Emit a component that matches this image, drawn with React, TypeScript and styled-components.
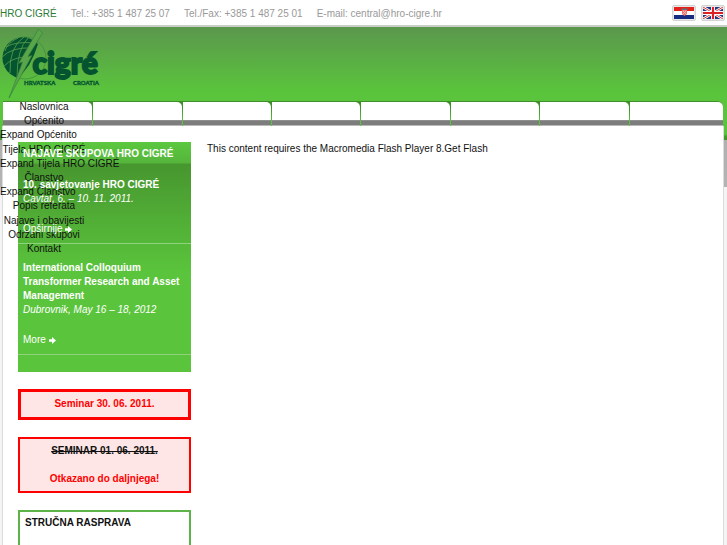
import React from "react";
import styled, { createGlobalStyle } from "styled-components";

const GlobalStyle = createGlobalStyle`
  * { box-sizing: border-box; }
  body {
    margin: 0;
    overflow: hidden;
    background: #fff;
    color: #111;
    font: 10px/14px "Liberation Sans", Arial, sans-serif;
  }
  p, h1, h2, ul { margin: 0; padding: 0; font-size: inherit; }
  a { color: inherit; text-decoration: none; }
`;

const Backdrop = styled.div`
  background:
    linear-gradient(#5b974d, #5ac43c 64px, #5ac43c 107px, #42962c 110px, #42962c 113px, #b0b0b0 113px, #b4b4b4 160px, #f4f4f4 160px)
    0 27px / 100% 100% no-repeat;
`;

const TopBar = styled.div`
  display: flex;
  justify-content: space-between;
  align-items: center;
  height: 27px;
  padding-right: 2px;
  background: #fff;
  border-bottom: 2px solid #c9cfc7;
`;

const Contact = styled.div`
  display: flex;
  gap: 14px;
  padding-top: 2px;
  color: #999;
`;

const Company = styled.span`
  color: #2b7a35;
`;

const Flags = styled.div`
  display: flex;
  gap: 5px;
`;

const FlagLink = styled.a`
  display: flex;
  padding: 1px;
  background: #e8e8e8;
  border: 1px solid #d4d4d4;
  border-radius: 2px;
`;

const Header = styled.header`
  height: 74px;
`;

const Sheet = styled.div`
  margin: 0 4px 0 3px;
`;

const Tabs = styled.div`
  display: grid;
  grid-template-columns: 90fr repeat(6, 89fr) 93fr;
  height: 25px;
  padding-top: 1px;
  background: linear-gradient(#3f8f2a 6px, #5ac43c 20px);
  border-radius: 0 6px 0 0;
`;

const Tab = styled.div`
  background: linear-gradient(#fff 18px, #a0a0a0 18px, #7d7d7d 19px, #7d7d7d 23px, #b9b9b9 23px);
  border-radius: 0 5px 0 0;
  margin-right: 1px;

  &:last-child { margin-right: 0; }
`;

const Menu = styled.ul`
  position: absolute;
  z-index: 1;
  top: 100px;
  left: 0;
  display: flex;
  flex-direction: column;
  justify-content: space-between;
  width: 88px;
  height: 156px;
  list-style: none;
  text-align: center;
  white-space: nowrap;
`;

const MenuItem = styled.li<{ $expander?: boolean }>`
  text-align: ${(p) => (p.$expander ? "left" : "center")};
`;

const Content = styled.div`
  display: flex;
  align-items: flex-start;
  gap: 16px;
  margin: 0 -1px;
  padding: 16px 16px 0 15px;
  background: #fff;
  border: solid #dcdcdc;
  border-width: 0 1px;
`;

const Sidebar = styled.aside`
  display: flex;
  flex-direction: column;
  gap: 17px;
  width: 173px;
  flex-shrink: 0;
`;

const News = styled.section`
  height: 230px;
  color: #fff;
  background: linear-gradient(#5cc83f, #55b53b 21px, #47962f 22px, #5ac43c 130px);
`;

const NewsTitle = styled.h2`
  position: relative;
  z-index: 2;
  padding: 5px 5px 3px;
`;

const Entry = styled.article<{ $lead?: boolean }>`
  position: relative;
  z-index: 2;
  padding: ${(p) => (p.$lead ? "14px 5px 7px" : "17px 5px 7px")};
  border-bottom: 1px solid #8fd27c;
`;

const Place = styled.p`
  font-style: italic;
  margin-bottom: 16px;
`;

const More = styled.a`
  display: flex;
  align-items: center;
  gap: 3px;
`;

const Notice = styled.section<{ $heavy?: boolean }>`
  padding: ${(p) => (p.$heavy ? "5px 5px 6px" : "5px")};
  border: ${(p) => (p.$heavy ? 3 : 2)}px solid #f00;
  background: #ffe6e6;
  color: #f00;
  font-weight: bold;
  text-align: center;
`;

const Cancelled = styled.del`
  display: block;
  margin-bottom: 14px;
  color: #111;
`;

const Discussion = styled.section`
  height: 60px;
  padding: 4px 5px;
  border: 2px solid #5cb348;
`;

const Main = styled.main`
  flex: 1;
`;

const Arrow = () => (
  <svg width="7" height="7" viewBox="0 0 7 7" aria-hidden="true">
    <path d="M0 2.300h3V0L7 3.500L3 7V4.700H0z" fill="#fff" />
  </svg>
);

const CroatianFlag = () => (
  <svg width="20" height="12" viewBox="0 0 20 12" aria-hidden="true">
    <path fill="#e32119" d="M0 0h20v4H0z" />
    <path fill="#fff" d="M0 4h20v4H0z" />
    <path fill="#152c80" d="M0 8h20v4H0z" />
    <path fill="#ee7770" d="M8 3h5v4l-2.500 2L8 7z" />
    <path fill="#f8b8b4" d="M9 4h1v1H9zM11 4h1v1h-1zM10 5h1v1h-1zM9 6h1v1H9zM11 6h1v1h-1z" />
    <path fill="#667083" d="M7.500 1.500h6V3h-6z" />
  </svg>
);

const BritishFlag = () => (
  <svg width="20" height="12" viewBox="0 0 20 12" aria-hidden="true">
    <path fill="#26387f" d="M0 0h20v12H0z" />
    <path stroke="#fff" strokeWidth="2.600" d="M0 0l20 12M20 0L0 12" />
    <path stroke="#e23b3b" strokeWidth="1" d="M0 0l20 12M20 0L0 12" />
    <path stroke="#fff" strokeWidth="4" d="M10 0v12M0 6h20" />
    <path stroke="#dd2026" strokeWidth="2.200" d="M10 0v12M0 6h20" />
  </svg>
);

const Logo = () => (
  <svg width="104" height="74" viewBox="0 0 104 74" role="img" aria-label="Cigré Hrvatska Croatia">
    <circle cx="25" cy="31" r="21" fill="none" stroke="#3d8a3d" strokeWidth="0.700" />
    <path fill="#04552f" d="M38 17A20.500 20.500 0 1 0 19 51L29 38L34 28z" />
    <g fill="none" stroke="#5a9f4e" strokeWidth="0.800">
      <path d="M2 30Q12 20 31 21M6 20Q16 14 34 16M4 39Q12 31 24 30" />
      <path d="M24 10Q9 20 10 46M28 11Q17 22 17 50M18 11Q7 16 5 24" />
    </g>
    <path d="M38.500 2L42.500 6L28 29.500L32 28.500L9 71L22.500 35L18.500 36.500z" fill="#5aa54a" stroke="#337d3c" strokeWidth="0.600" />
    <text x="32.500" y="47" fill="#04552f" stroke="#04552f" strokeWidth="1.900" fontFamily="Lato" fontWeight="900" fontSize="30">cigré</text>
    <g fill="#04552f" stroke="#04552f" strokeWidth="0.300" fontFamily="Lato" fontWeight="900" fontSize="6">
      <text x="24" y="58">HRVATSKA</text>
      <text x="73" y="58">CROATIA</text>
    </g>
  </svg>
);

const menu: { label: string; expander?: boolean }[] = [
  { label: "Naslovnica" },
  { label: "Općenito" },
  { label: "Expand Općenito", expander: true },
  { label: "Tijela HRO CIGRÉ" },
  { label: "Expand Tijela HRO CIGRÉ", expander: true },
  { label: "Članstvo" },
  { label: "Expand Članstvo", expander: true },
  { label: "Popis referata" },
  { label: "Najave i obavijesti" },
  { label: "Održani skupovi" },
  { label: "Kontakt" },
];

export default function App() {
  return (
    <Backdrop>
      <GlobalStyle />
      <TopBar>
        <Contact>
          <Company>HRO CIGRÉ</Company>
          <span>Tel.: +385 1 487 25 07</span>
          <span>Tel./Fax: +385 1 487 25 01</span>
          <span>E-mail: central@hro-cigre.hr</span>
        </Contact>
        <Flags>
          <FlagLink href="#hr" aria-label="Hrvatski"><CroatianFlag /></FlagLink>
          <FlagLink href="#en" aria-label="English"><BritishFlag /></FlagLink>
        </Flags>
      </TopBar>
      <Header><Logo /></Header>
      <Sheet>
        <Tabs>
          {Array.from({ length: 8 }, (_, i) => <Tab key={i} />)}
        </Tabs>
        <Content>
          <Sidebar>
            <News>
              <NewsTitle>NAJAVE SKUPOVA HRO CIGRÉ</NewsTitle>
              <Entry $lead>
                <h2>10. savjetovanje HRO CIGRÉ</h2>
                <Place>Cavtat, 6. – 10. 11. 2011.</Place>
                <More href="#savjetovanje">Opširnije <Arrow /></More>
              </Entry>
              <Entry>
                <h2>International Colloquium Transformer Research and Asset Management</h2>
                <Place>Dubrovnik, May 16 – 18, 2012</Place>
                <More href="#colloquium">More <Arrow /></More>
              </Entry>
            </News>
            <Notice $heavy>Seminar 30. 06. 2011.</Notice>
            <Notice>
              <Cancelled>SEMINAR 01. 06. 2011.</Cancelled>
              <p>Otkazano do daljnjega!</p>
            </Notice>
            <Discussion><h2>STRUČNA RASPRAVA</h2></Discussion>
          </Sidebar>
          <Main>
            <p>This content requires the Macromedia Flash Player 8.<a href="#flash">Get Flash</a></p>
          </Main>
        </Content>
      </Sheet>
      <Menu>
        {menu.map((m) => (
          <MenuItem key={m.label} $expander={m.expander}><a href="#menu">{m.label}</a></MenuItem>
        ))}
      </Menu>
    </Backdrop>
  );
}
